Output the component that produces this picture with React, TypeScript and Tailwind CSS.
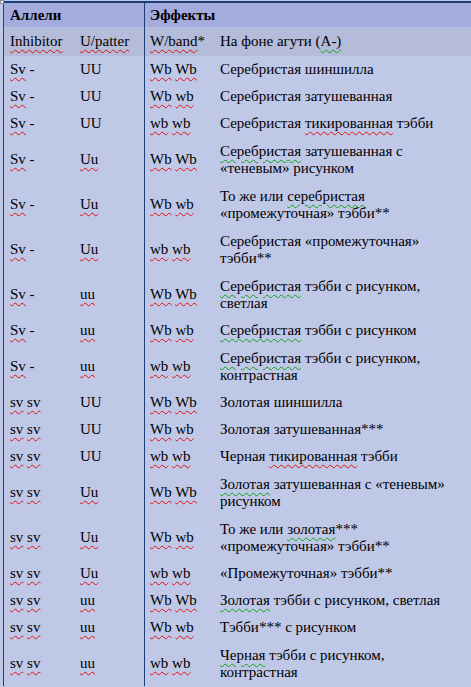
import type { ReactNode } from "react";

const R = ({ children }: { children: ReactNode }) => (
  <span className="underline decoration-wavy decoration-[#e01010] decoration-1 underline-offset-[3px]">
    {children}
  </span>
);

const G = ({ children }: { children: ReactNode }) => (
  <span className="underline decoration-wavy decoration-[#10a010] decoration-1 underline-offset-[3px]">
    {children}
  </span>
);

type Row = { a: ReactNode; b: ReactNode; c: ReactNode; d: ReactNode[] };

const Sv = <><R>Sv</R>{" -"}</>;
const svsv = <><R>sv</R>{" "}<R>sv</R></>;
const WW = <><R>Wb</R>{" "}<R>Wb</R></>;
const Ww = <><R>Wb</R>{" "}<R>wb</R></>;
const ww = <><R>wb</R>{" "}<R>wb</R></>;
const UU = "UU";
const Uu = <R>Uu</R>;
const uu = <R>uu</R>;

const rows: Row[] = [
  { a: Sv, b: UU, c: WW, d: ["Серебристая шиншилла"] },
  { a: Sv, b: UU, c: Ww, d: ["Серебристая затушеванная"] },
  { a: Sv, b: UU, c: ww, d: [<>{"Серебристая "}<R>тикированная</R>{" тэбби"}</>] },
  { a: Sv, b: Uu, c: WW, d: [<><G>Серебристая</G>{" затушеванная с"}</>, "«теневым» рисунком"] },
  { a: Sv, b: Uu, c: Ww, d: [<>{"То же или "}<G>серебристая</G></>, "«промежуточная» тэбби**"] },
  { a: Sv, b: Uu, c: ww, d: ["Серебристая «промежуточная»", "тэбби**"] },
  { a: Sv, b: uu, c: WW, d: [<><G>Серебристая</G>{" тэбби с рисунком,"}</>, "светлая"] },
  { a: Sv, b: uu, c: Ww, d: [<><G>Серебристая</G>{" тэбби с рисунком"}</>] },
  { a: Sv, b: uu, c: ww, d: [<><G>Серебристая</G>{" тэбби с рисунком,"}</>, "контрастная"] },
  { a: svsv, b: UU, c: WW, d: ["Золотая шиншилла"] },
  { a: svsv, b: UU, c: Ww, d: ["Золотая затушеванная***"] },
  { a: svsv, b: UU, c: ww, d: [<>{"Черная "}<R>тикированная</R>{" тэбби"}</>] },
  { a: svsv, b: Uu, c: WW, d: [<><G>Золотая</G>{" затушеванная с «теневым»"}</>, "рисунком"] },
  { a: svsv, b: Uu, c: Ww, d: [<>{"То же или "}<G>золотая</G>{"***"}</>, "«промежуточная» тэбби**"] },
  { a: svsv, b: Uu, c: ww, d: ["«Промежуточная» тэбби**"] },
  { a: svsv, b: uu, c: WW, d: [<><G>Золотая</G>{" тэбби с рисунком, светлая"}</>] },
  { a: svsv, b: uu, c: Ww, d: ["Тэбби*** с рисунком"] },
  { a: svsv, b: uu, c: ww, d: [<><G>Черная</G>{" тэбби с рисунком,"}</>, "контрастная"] },
];

export default function App() {
  return (
    <div
      className="relative w-[471px] h-[687px] overflow-hidden bg-[#c0c8e8] text-black text-[15px] leading-[17px]"
      style={{ fontFamily: '"Liberation Serif", "Times New Roman", serif' }}
    >
      <span className="absolute left-0 top-0 w-[4px] h-[4px] border border-[#8a8a8a] bg-white" />
      <div className="mt-[1px] ml-[3px] border-t-2 border-l border-[#1c3f7c] whitespace-nowrap">
        <div className="flex h-[24px] bg-[#a3acdc] font-bold items-center">
          <div className="w-[141px] pl-[6px] h-full flex items-center border-r border-[#1c3f7c]">Аллели</div>
          <div className="pl-[5px]">Эффекты</div>
        </div>
        <div className="flex h-[29px] bg-[#b5bcd9]">
          <div className="w-[70px] pl-[6px] flex items-center">
            <R>Inhibitor</R>
          </div>
          <div className="w-[71px] pl-[6px] flex items-center border-r border-[#1c3f7c]">
            <R>U/patter</R>
          </div>
          <div className="w-[70px] pl-[5px] flex items-center">
            <span><R>W/band</R>*</span>
          </div>
          <div className="flex-1 pl-[5px] flex items-center">
            <span>{"На фоне агути ("}<G>А-)</G></span>
          </div>
        </div>
        {rows.map((r, i) => (
          <div key={i} className={`flex ${r.d.length > 1 ? "h-[45px]" : "h-[27px]"}`}>
            <div className="w-[70px] pl-[6px] flex items-center">
              <span>{r.a}</span>
            </div>
            <div className="w-[71px] pl-[6px] flex items-center border-r border-[#1c3f7c]">
              <span>{r.b}</span>
            </div>
            <div className="w-[70px] pl-[5px] flex items-center">
              <span>{r.c}</span>
            </div>
            <div className="flex-1 pl-[5px] flex flex-col justify-center">
              {r.d.map((line, j) => (
                <div key={j}>{line}</div>
              ))}
            </div>
          </div>
        ))}
      </div>
    </div>
  );
}
